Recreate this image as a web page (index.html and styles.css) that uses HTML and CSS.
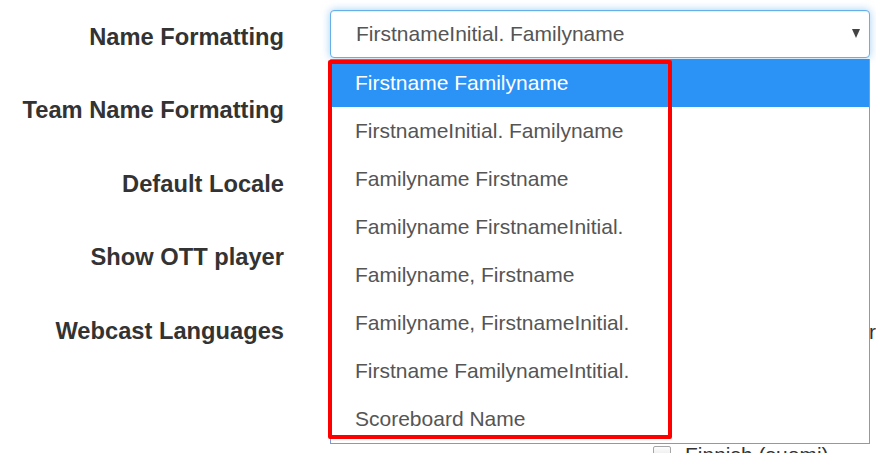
FILE: index.html
```html
<!DOCTYPE html>
<html lang="en">
<head>
<meta charset="utf-8">
<title>Settings</title>
<link rel="stylesheet" href="styles.css">
</head>
<body>
<form class="settings">
  <div class="row">
    <label class="row-label">Name Formatting</label>
    <div class="row-control">
      <div class="select-wrap">
        <div class="select is-focused">
          <span>FirstnameInitial. Familyname</span>
          <svg class="caret" width="8" height="9" viewBox="0 0 8 9"><polygon points="0,0 8,0 4,9" fill="#444"/></svg>
        </div>
        <ul class="dropdown">
          <li class="option is-active">Firstname Familyname</li>
          <li class="option">FirstnameInitial. Familyname</li>
          <li class="option">Familyname Firstname</li>
          <li class="option">Familyname FirstnameInitial.</li>
          <li class="option">Familyname, Firstname</li>
          <li class="option">Familyname, FirstnameInitial.</li>
          <li class="option">Firstname FamilynameIntitial.</li>
          <li class="option">Scoreboard Name</li>
        </ul>
        <div class="highlight-box"></div>
      </div>
    </div>
  </div>
  <div class="row">
    <label class="row-label">Team Name Formatting</label>
    <div class="row-control">
      <div class="select"></div>
    </div>
  </div>
  <div class="row">
    <label class="row-label">Default Locale</label>
    <div class="row-control">
      <div class="select"></div>
    </div>
  </div>
  <div class="row">
    <label class="row-label">Show OTT player</label>
    <div class="row-control">
      <div class="select"></div>
    </div>
  </div>
  <div class="row row-last">
    <label class="row-label">Webcast Languages</label>
    <div class="row-control">
      <div class="checks">
        <div class="check"><span class="box"></span></div>
        <div class="check"><span class="box"></span></div>
        <div class="check"><span class="box"></span><span>română</span></div>
        <div class="check"><span class="box"></span></div>
        <div class="check"><span class="box"></span></div>
        <div class="check empty"></div>
        <div class="check"><span class="box"></span></div>
        <div class="check"><span class="box"></span></div>
        <div class="check empty"></div>
        <div class="check empty"></div>
        <div class="check"><span class="box"></span><span>Finnish (suomi)</span></div>
      </div>
    </div>
  </div>
</form>
</body>
</html>
```

FILE: styles.css
```css
html {
  overflow: hidden;
}

body {
  margin: 0;
  background: #fff;
  font-family: "Liberation Sans", Arial, sans-serif;
  color: #333;
}

.settings {
  display: block;
}

.row {
  display: grid;
  grid-template-columns: 284px 540px;
  column-gap: 46px;
  height: 73.4px;
}

.row-last {
  height: auto;
}

.row-label {
  text-align: right;
  font-weight: bold;
  font-size: 23.7px;
  line-height: 28px;
  padding-top: 23px;
  color: #333;
  white-space: nowrap;
}

.row-control {
  padding-top: 10px;
}

.select-wrap {
  position: relative;
}

.select {
  box-sizing: border-box;
  height: 48px;
  display: flex;
  align-items: center;
  justify-content: space-between;
  padding: 0 9px 0 25px;
  border: 1px solid #ccc;
  border-radius: 4px;
  background: #fff;
  font-size: 21px;
  color: #555;
}

.select.is-focused {
  border-color: #66afe9;
  box-shadow: inset 0 1px 1px rgba(0, 0, 0, 0.075), 0 0 8px rgba(102, 175, 233, 0.6);
}

.caret {
  display: block;
  margin-top: -2px;
}

.dropdown {
  position: absolute;
  top: calc(100% + 1px);
  left: 0;
  right: 0;
  z-index: 10;
  margin: 0;
  padding: 0;
  list-style: none;
  background: #fff;
  border: 1px solid #7b9bd1;
  border-top: none;
}

.option {
  height: 48px;
  display: flex;
  align-items: center;
  padding-left: 24px;
  font-size: 21px;
  color: #555;
  white-space: nowrap;
}

.option.is-active {
  background: #2b92f6;
  color: #fff;
}

.highlight-box {
  position: absolute;
  z-index: 11;
  top: 50px;
  left: -2px;
  width: 344px;
  height: 379px;
  box-sizing: border-box;
  border: 4px solid #ff0000;
  border-radius: 2px;
}

.checks {
  display: grid;
  grid-template-columns: 323px 184px 184px;
  grid-auto-rows: 41.3px;
  margin-top: 7px;
  width: 691px;
}

.check {
  display: flex;
  align-items: center;
  gap: 14px;
  font-size: 21px;
  line-height: 41.3px;
  color: #333;
  white-space: nowrap;
}

.box {
  flex: none;
  width: 18px;
  height: 18px;
  box-sizing: border-box;
  border: 1px solid #a6a6a6;
  border-radius: 2px;
  background: linear-gradient(#fdfdfd, #dcdcdc);
}
```
